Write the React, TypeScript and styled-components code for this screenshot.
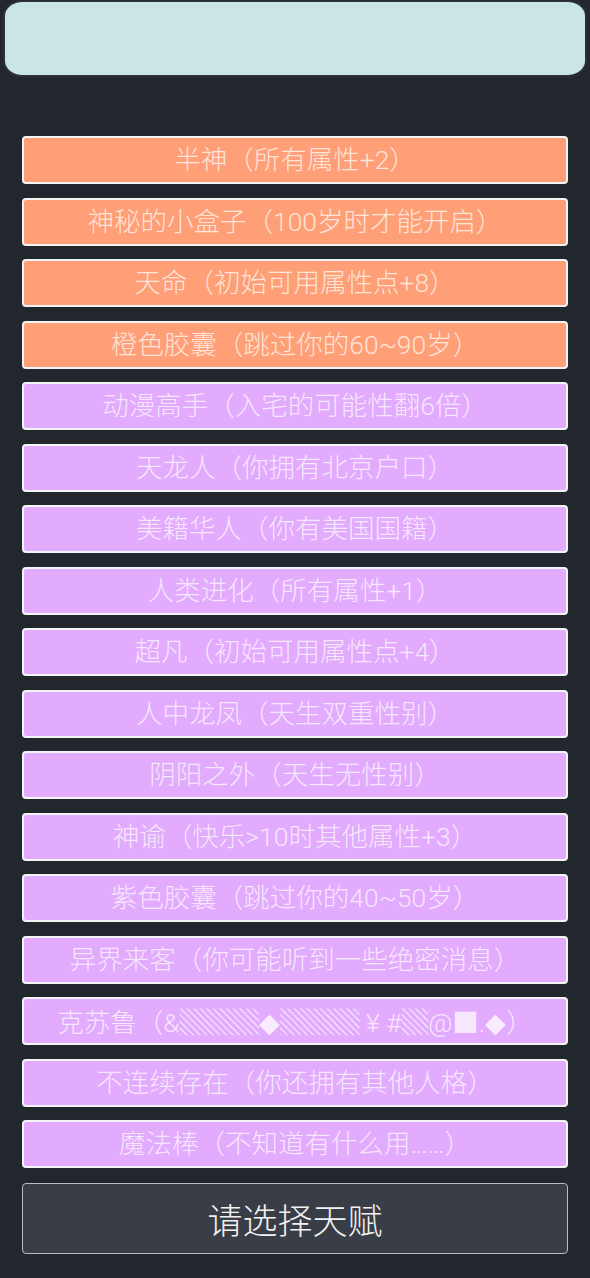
import React from "react";
import styled, { createGlobalStyle } from "styled-components";

const Global = createGlobalStyle`
  html, body {
    margin: 0;
    padding: 0;
    background: #22272e;
  }
  body {
    font-family: Roboto, "Noto Sans CJK SC", "Noto Sans", sans-serif;
  }
`;

const Page = styled.div`
  width: 590px;
  min-height: 1278px;
  background: #22272e;
  box-sizing: border-box;
  padding: 2px 0 0;
  display: flex;
  flex-direction: column;
`;

const Banner = styled.div`
  margin: 0 5px;
  height: 73px;
  background: #c9e6e5;
  border-radius: 18px / 14px;
  box-shadow: 0 0 4px rgba(80, 90, 90, 0.6);
`;

const List = styled.ul`
  list-style: none;
  margin: 61px 0 0;
  padding: 0 22px;
  display: flex;
  flex-direction: column;
  gap: 13.5px;
`;

const Talent = styled.li<{ $grade: "orange" | "purple" }>`
  height: 48px;
  box-sizing: border-box;
  border: 2px solid #f4f4f4;
  border-radius: 4px;
  background: ${(p) => (p.$grade === "orange" ? "#ff9f77" : "#e2abfd")};
  color: rgba(255, 255, 255, 0.72);
  font-family: Roboto, "Noto Sans CJK SC", sans-serif;
  font-size: 26.5px;
  font-weight: 300;
  line-height: 44px;
  text-align: center;
  white-space: nowrap;
  overflow: hidden;
`;

const Shade = styled.span`
  font-family: "Noto Sans CJK SC", sans-serif;
  color: rgba(255, 255, 255, 0.8);
`;

const Glyph = styled.span`
  font-family: "DejaVu Sans", sans-serif;
  color: rgba(255, 255, 255, 0.8);
`;

const Confirm = styled.button`
  margin: 15px 22px 0;
  height: 71px;
  box-sizing: border-box;
  border: 1.5px solid #b8bcc2;
  border-radius: 4px;
  background: #393d46;
  color: #f2f2f2;
  font-family: Roboto, "Noto Sans CJK SC", sans-serif;
  font-size: 35px;
  font-weight: 300;
  padding: 0;
`;

const talents: { name: React.ReactNode; key: string; grade: "orange" | "purple" }[] = [
  { key: "a", name: "半神（所有属性+2）", grade: "orange" },
  { key: "b", name: "神秘的小盒子（100岁时才能开启）", grade: "orange" },
  { key: "c", name: "天命（初始可用属性点+8）", grade: "orange" },
  { key: "d", name: "橙色胶囊（跳过你的60~90岁）", grade: "orange" },
  { key: "e", name: "动漫高手（入宅的可能性翻6倍）", grade: "purple" },
  { key: "f", name: "天龙人（你拥有北京户口）", grade: "purple" },
  { key: "g", name: "美籍华人（你有美国国籍）", grade: "purple" },
  { key: "h", name: "人类进化（所有属性+1）", grade: "purple" },
  { key: "i", name: "超凡（初始可用属性点+4）", grade: "purple" },
  { key: "j", name: "人中龙凤（天生双重性别）", grade: "purple" },
  { key: "k", name: "阴阳之外（天生无性别）", grade: "purple" },
  { key: "l", name: "神谕（快乐>10时其他属性+3）", grade: "purple" },
  { key: "m", name: "紫色胶囊（跳过你的40~50岁）", grade: "purple" },
  { key: "n", name: "异界来客（你可能听到一些绝密消息）", grade: "purple" },
  {
    key: "o",
    name: (
      <>
        克苏鲁（&amp;<Shade>▒▒▒</Shade>
        <Glyph>◆</Glyph>
        <Shade>▒▒▒</Shade> ¥ #<Shade>▒</Shade>@■.<Glyph>◆</Glyph>）
      </>
    ),
    grade: "purple",
  },
  { key: "p", name: "不连续存在（你还拥有其他人格）", grade: "purple" },
  { key: "q", name: "魔法棒（不知道有什么用……）", grade: "purple" },
];

export default function App() {
  return (
    <Page>
      <Global />
      <Banner />
      <List>
        {talents.map((t) => (
          <Talent key={t.key} $grade={t.grade}>
            {t.name}
          </Talent>
        ))}
      </List>
      <Confirm>请选择天赋</Confirm>
    </Page>
  );
}
